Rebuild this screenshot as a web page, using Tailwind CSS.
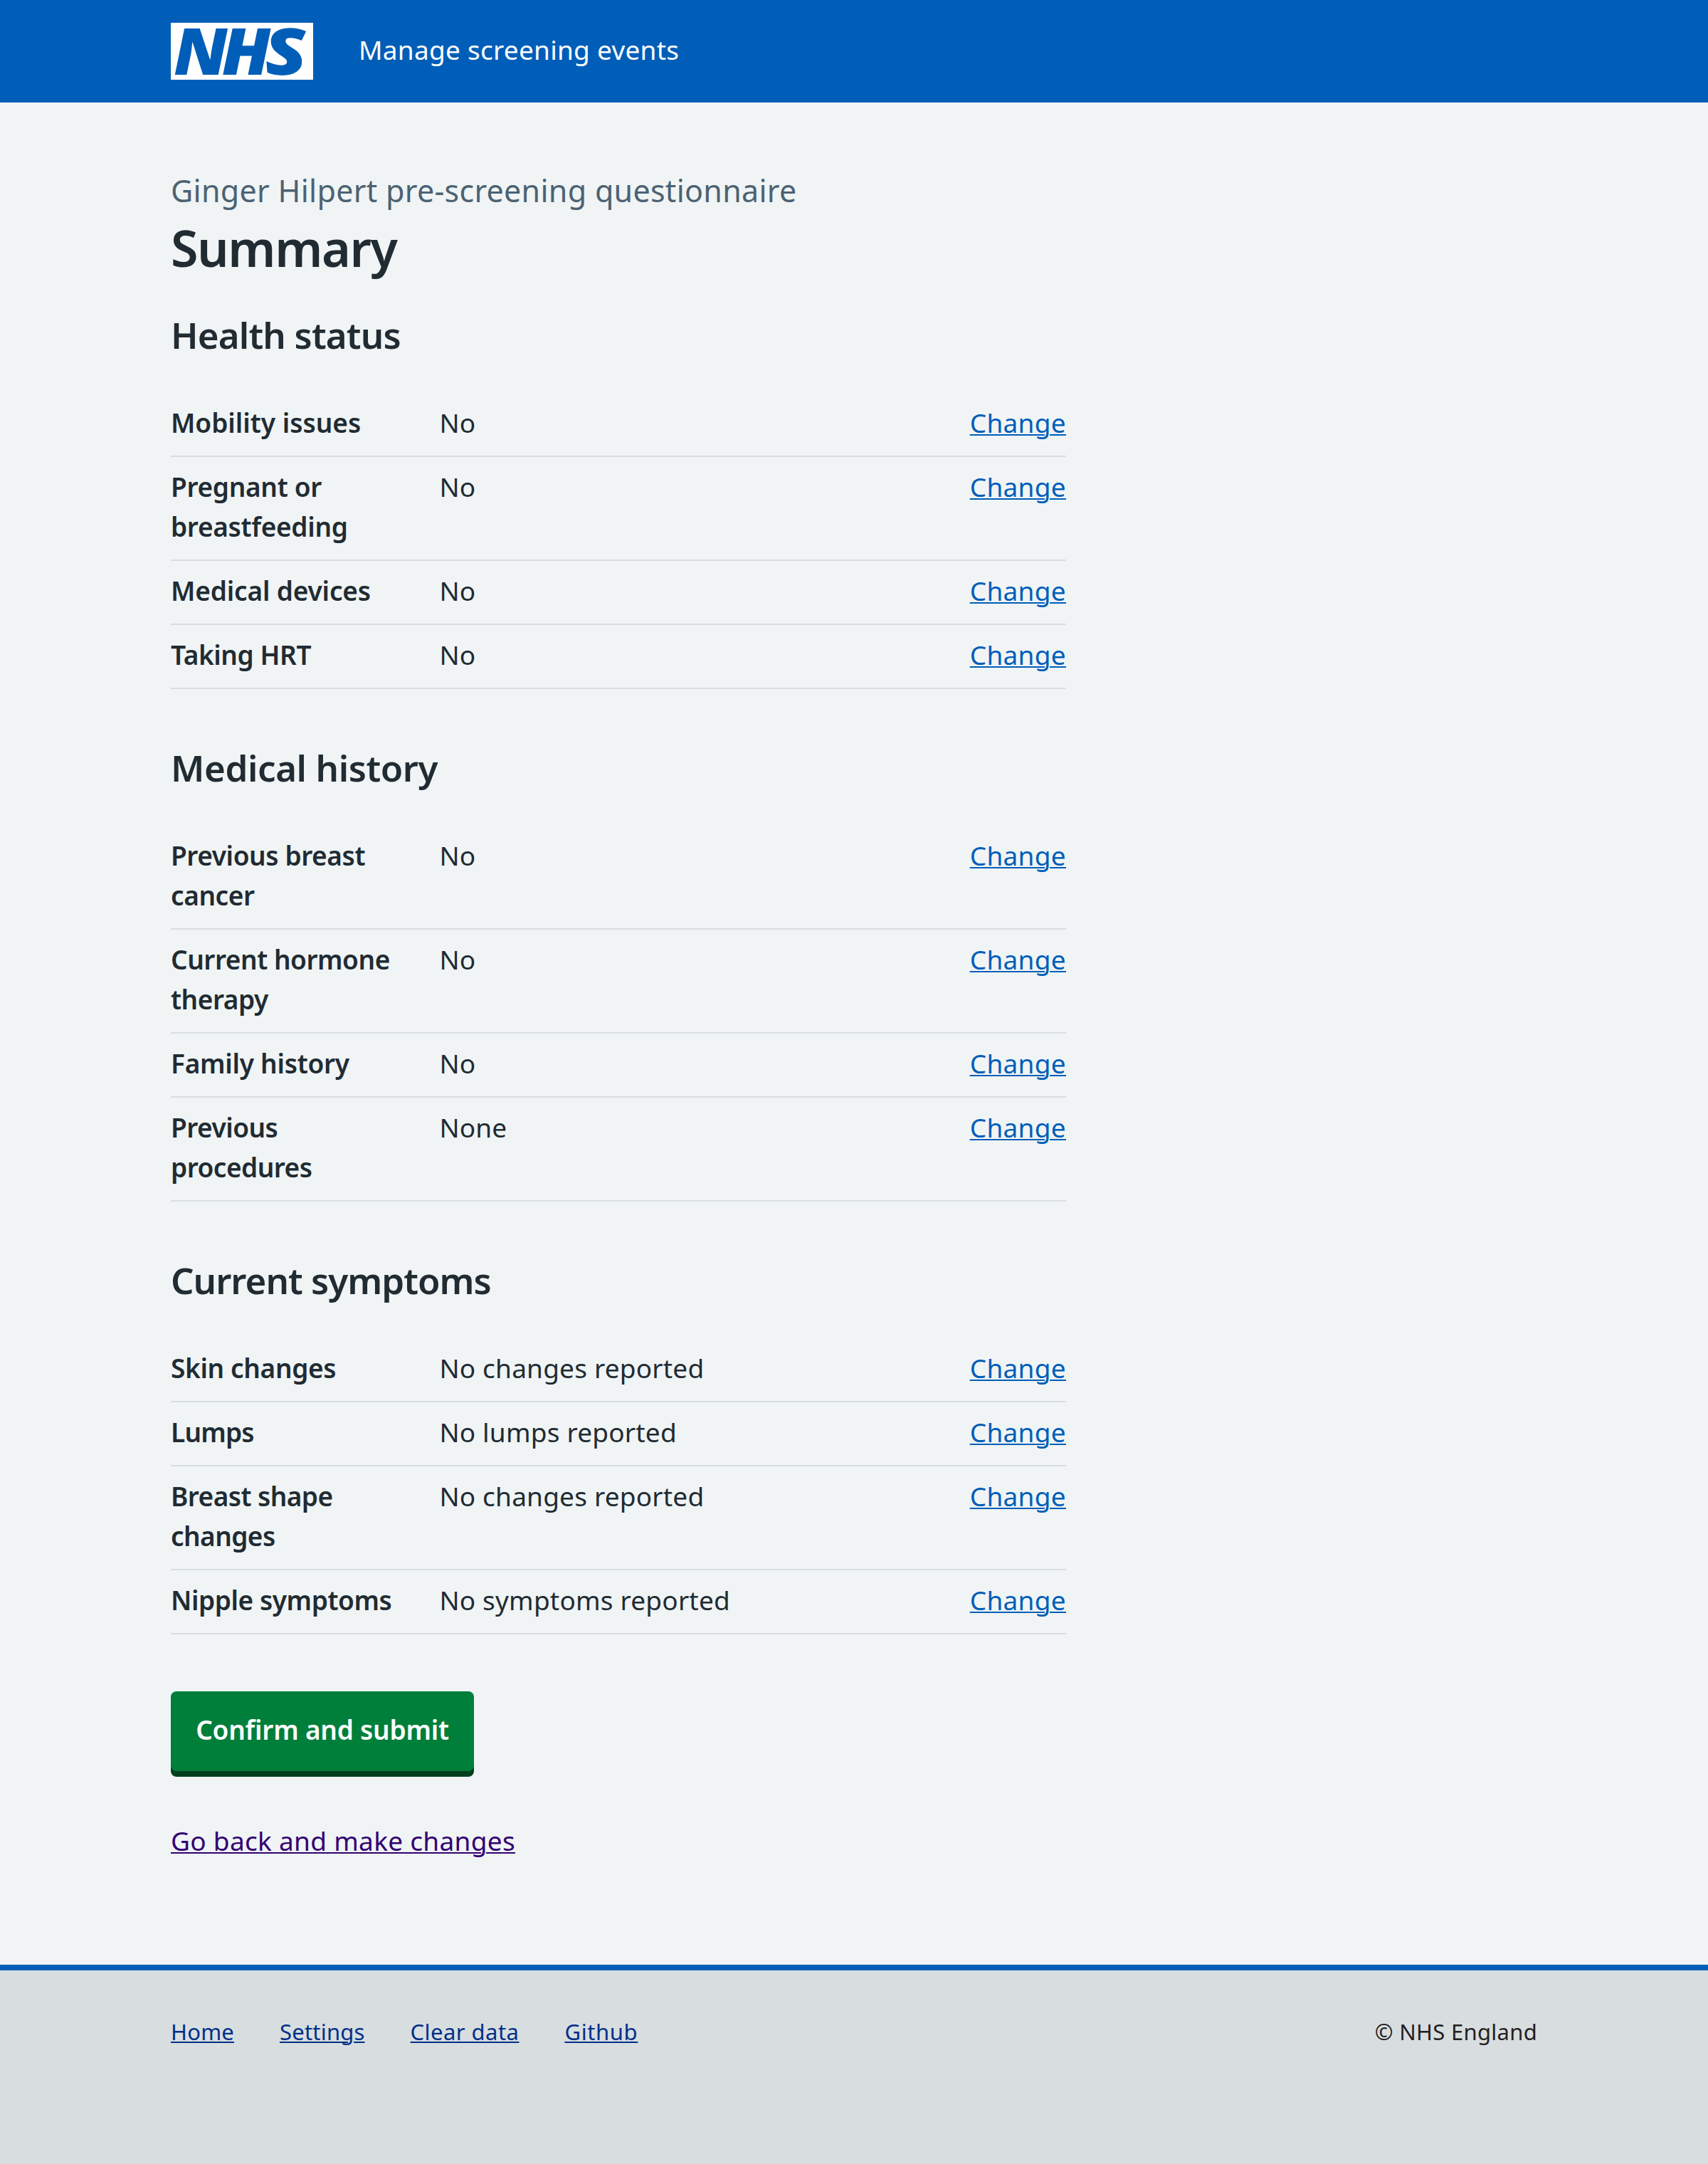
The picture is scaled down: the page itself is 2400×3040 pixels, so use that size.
<!DOCTYPE html>
<html lang="en">
<head>
<meta charset="utf-8">
<title>Summary</title>
<script src="https://cdn.jsdelivr.net/npm/@tailwindcss/browser@4"></script>
</head>
<body class="min-h-[3040px] bg-[#f0f4f5] font-['Noto_Sans',sans-serif] text-[37px] leading-[56px] text-[#212b32]">
<header class="flex h-36 items-center gap-16 bg-[#005eb8] px-60 text-white">
  <svg class="h-20 w-[200px] shrink-0 overflow-visible" viewBox="0 0 200 80" role="img" aria-label="NHS">
    <rect width="200" height="80" fill="#fff"/>
    <g font-family="Noto Sans" font-size="91" font-weight="900" font-style="italic" fill="#005eb8">
      <text transform="matrix(1.066 0 .02 1 4.2 72.6)">N</text>
      <text transform="matrix(1.073 0 .02 1 71.8 72.6)">H</text>
      <text transform="matrix(1.2 0 .07 1 133.4 72.6)">S</text>
    </g>
  </svg>
  <span class="pb-1 tracking-[0.26px]">Manage screening events</span>
</header>
<main class="px-60 pt-24 pb-[146px]">
  <h1>
    <span class="block text-[43px] leading-[56px] tracking-[0.28px] text-[#4c6272]">Ginger Hilpert pre-screening questionnaire</span>
    <span class="mt-3 block text-[70px] leading-20 font-semibold tracking-[-1.4px]">Summary</span>
  </h1>
  <div id="sections" class="mt-[50px] flex w-[1258px] flex-col gap-[78px]"></div>
  <button class="mt-20 flex h-28 w-[426px] justify-center rounded-lg bg-[#007f3b] pt-[26px] font-semibold tracking-[-0.22px] text-white shadow-[0_8px_0_#00401e]">Confirm and submit</button>
  <p class="mt-[70px]"><a class="tracking-[0.3px] text-[#330072] underline decoration-2 underline-offset-2">Go back and make changes</a></p>
</main>
<footer class="flex h-[280px] justify-between border-t-8 border-[#005eb8] bg-[#d8dde0] px-60 pt-[62px] text-[31px] leading-12">
  <nav class="flex gap-16 text-[#003087]">
    <a class="tracking-[0.2px] underline decoration-2 underline-offset-2">Home</a>
    <a class="tracking-[0.2px] underline decoration-2 underline-offset-2">Settings</a>
    <a class="tracking-[0.45px] underline decoration-2 underline-offset-2">Clear data</a>
    <a class="tracking-[0.62px] underline decoration-2 underline-offset-2">Github</a>
  </nav>
  <p class="tracking-[0.28px] text-[#231f20]">© NHS England</p>
</footer>
<script>
// Each section: title, title tracking, rows of [label, value, label tracking in px]
const sections = [
  ['Health status', 'tracking-[-0.8px]', [
    ['Mobility issues', 'No', 0],
    ['Pregnant or<br>breastfeeding', 'No', -0.3],
    ['Medical devices', 'No', -0.15],
    ['Taking HRT', 'No', -0.4]]],
  ['Medical history', 'tracking-[-0.4px]', [
    ['Previous breast<br>cancer', 'No', -0.4],
    ['Current hormone<br>therapy', 'No', -0.45],
    ['Family history', 'No', -0.26],
    ['Previous<br>procedures', 'None', -0.5]]],
  ['Current symptoms', 'tracking-[-0.95px]', [
    ['Skin changes', 'No changes reported', -0.34],
    ['Lumps', 'No lumps reported', -0.8],
    ['Breast shape<br>changes', 'No changes reported', -0.55],
    ['Nipple symptoms', 'No symptoms reported', -0.42]]],
];
document.getElementById('sections').innerHTML = sections.map(([title, tracking, rows]) => `
  <section>
    <h2 class="mb-[50px] text-[51px] leading-16 font-semibold ${tracking}">${title}</h2>
    <dl>${rows.map(([label, value, spacing]) => `
      <div class="grid grid-cols-[30%_1fr_auto] border-b-2 border-[#d8dde0] pt-[14px] pb-[18px]">
        <dt class="font-semibold" style="letter-spacing:${spacing}px">${label}</dt>
        <dd class="tracking-[0.2px]">${value}</dd>
        <dd><a class="tracking-[0.3px] text-[#005eb8] underline decoration-2 underline-offset-2">Change</a></dd>
      </div>`).join('')}</dl>
  </section>`).join('');
</script>
</body>
</html>
